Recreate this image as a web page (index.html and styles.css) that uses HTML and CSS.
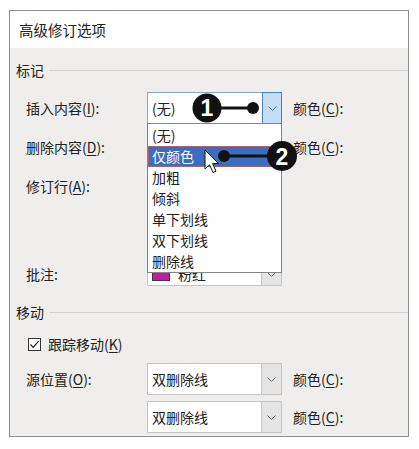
FILE: index.html
```html
<!DOCTYPE html>
<html lang="zh-CN">
<head>
<meta charset="utf-8">
<title>高级修订选项</title>
<link rel="stylesheet" href="styles.css">
</head>
<body>
<div class="dialog">
  <div class="titlebar">高级修订选项</div>
  <div class="content">
    <div class="group-head"><span>标记</span><i class="rule"></i></div>

    <div class="row r1">
      <span class="lbl">插入内容(<u>I</u>):</span>
      <div class="combo active">
        <span class="val">(无)</span>
        <span class="btn"><svg width="9" height="5" viewBox="0 0 9 5"><path d="M0.5 0.5 L4.5 4.5 L8.5 0.5" fill="none" stroke="#3f6ea8" stroke-width="1"/></svg></span>
        <ul class="list">
          <li>(无)</li>
          <li class="sel">仅颜色</li>
          <li>加粗</li>
          <li>倾斜</li>
          <li>单下划线</li>
          <li>双下划线</li>
          <li>删除线</li>
        </ul>
      </div>
      <span class="color-lbl">颜色(<u>C</u>):</span>
    </div>

    <div class="row r2">
      <span class="lbl">删除内容(<u>D</u>):</span>
      <div class="combo"><span class="val"></span><span class="btn"></span></div>
      <span class="color-lbl">颜色(<u>C</u>):</span>
    </div>

    <div class="row r3">
      <span class="lbl">修订行(<u>A</u>):</span>
      <div class="combo"><span class="val"></span><span class="btn"></span></div>
    </div>

    <div class="row r4">
      <span class="lbl">批注:</span>
      <div class="combo short">
        <span class="val"><i class="swatch"></i>粉红</span>
        <span class="btn"><svg width="9" height="5" viewBox="0 0 9 5"><path d="M0.5 0.5 L4.5 4.5 L8.5 0.5" fill="none" stroke="#666" stroke-width="1"/></svg></span>
      </div>
    </div>

    <div class="group-head g2"><span>移动</span><i class="rule"></i></div>

    <div class="check-row">
      <span class="checkbox"><svg width="11" height="11" viewBox="0 0 11 11"><path d="M1.5 5.5 L4.2 8.3 L9.6 2.2" fill="none" stroke="#222" stroke-width="1.2"/></svg></span>
      <span>跟踪移动(<u>K</u>)</span>
    </div>

    <div class="row r5">
      <span class="lbl">源位置(<u>O</u>):</span>
      <div class="combo">
        <span class="val">双删除线</span>
        <span class="btn"><svg width="9" height="5" viewBox="0 0 9 5"><path d="M0.5 0.5 L4.5 4.5 L8.5 0.5" fill="none" stroke="#666" stroke-width="1"/></svg></span>
      </div>
      <span class="color-lbl">颜色(<u>C</u>):</span>
    </div>

    <div class="row r6">
      <span class="lbl"></span>
      <div class="combo">
        <span class="val">双删除线</span>
        <span class="btn"><svg width="9" height="5" viewBox="0 0 9 5"><path d="M0.5 0.5 L4.5 4.5 L8.5 0.5" fill="none" stroke="#666" stroke-width="1"/></svg></span>
      </div>
      <span class="color-lbl">颜色(<u>C</u>):</span>
    </div>
  </div>

  <svg class="callouts" width="398" height="425" viewBox="10 11 398 425">
    <line x1="215" y1="108" x2="253" y2="108" stroke="#111" stroke-width="3"/>
    <circle cx="253" cy="108" r="6" fill="#111"/>
    <circle cx="207" cy="108" r="14.5" fill="#111"/>
    <text x="207" y="116" class="num">1</text>

    <path d="M205 150 L205 169 L209.5 164.8 L213 172.5 L216 171.2 L212.6 163.6 L218.6 163.6 Z" fill="#fff" stroke="#111" stroke-width="1"/>

    <line x1="224" y1="156" x2="272" y2="156" stroke="#111" stroke-width="3"/>
    <circle cx="224" cy="156" r="6" fill="#111"/>
    <circle cx="282" cy="156" r="15" fill="#111"/>
    <text x="282" y="164.5" class="num">2</text>
  </svg>
</div>
</body>
</html>
```

FILE: styles.css
```css
body {
  margin: 0;
  background: #ffffff;
  font-family: "Noto Sans CJK SC", "Noto Sans", sans-serif;
  font-size: 14px;
  color: #222222;
}

.dialog {
  position: relative;
  margin: 10px 0 0 9px;
  width: 400px;
  height: 427px;
  box-sizing: border-box;
  border: 1px solid #8f8f8f;
  background: #efeeec;
  overflow: hidden;
}

.titlebar {
  height: 37px;
  line-height: 37px;
  padding-left: 9px;
  background: #ffffff;
  font-size: 14.5px;
}

.content {
  padding-top: 13px;
}

.group-head {
  display: flex;
  align-items: center;
  gap: 5px;
  height: 18px;
  line-height: 18px;
  padding-left: 6px;
}

.group-head .rule {
  flex: 1;
  height: 1px;
  background: #d3d3d3;
}

.g2 {
  margin-top: 17px;
}

.row {
  display: flex;
  align-items: center;
  height: 32px;
  padding-left: 16px;
}

.r1 { margin-top: 13px; }
.r2 { margin-top: 7px; }
.r3 { margin-top: 7px; }
.r4 { margin-top: 60px; height: 24px; }
.r5 { margin-top: 10px; }
.r6 { margin-top: 6px; }

.lbl {
  width: 121px;
  line-height: 20px;
}

u {
  text-decoration: underline;
  text-underline-offset: 2px;
  text-decoration-thickness: 1px;
}

.combo {
  position: relative;
  display: flex;
  width: 135px;
  height: 32px;
  box-sizing: border-box;
  border: 1px solid #c4c4c4;
  background: #ffffff;
}

.combo.short {
  height: 24px;
}

.val {
  flex: 1;
  display: flex;
  align-items: center;
  padding-left: 4px;
  white-space: nowrap;
}

.btn {
  width: 19px;
  display: flex;
  align-items: center;
  justify-content: center;
  border-left: 1px solid #c4c4c4;
  background: #e4e4e4;
}

.combo.active {
  border-color: #8aa6c8;
}

.combo.active .btn {
  width: 20px;
  margin: -1px -1px -1px 0;
  box-sizing: border-box;
  border: 1px solid #4a82cc;
  background: #c6ddf4;
}

.swatch {
  display: inline-block;
  width: 18px;
  height: 13px;
  box-sizing: border-box;
  margin-right: 8px;
  border: 1px solid #3a3a3a;
  background: #c41b9f;
}

.color-lbl {
  margin-left: 11px;
  line-height: 20px;
}

.list {
  position: absolute;
  left: -1px;
  top: 30px;
  z-index: 2;
  width: 135px;
  box-sizing: border-box;
  margin: 0;
  padding: 1px 0 0;
  list-style: none;
  border: 1px solid #858585;
  background: #ffffff;
}

.list li {
  height: 21px;
  line-height: 21px;
  padding-left: 4px;
  box-sizing: border-box;
}

.list li.sel {
  background: #3b6dc0;
  color: #ffffff;
  border: 1px solid #a8646e;
  line-height: 19px;
  padding-left: 3px;
}

.check-row {
  display: flex;
  align-items: center;
  gap: 7px;
  height: 18px;
  margin-top: 14px;
  padding-left: 18px;
}

.checkbox {
  display: flex;
  align-items: center;
  justify-content: center;
  width: 13px;
  height: 13px;
  box-sizing: border-box;
  border: 1px solid #333333;
  background: #ffffff;
}

.callouts {
  position: absolute;
  left: 0;
  top: 0;
  z-index: 5;
}

.num {
  font-family: "Liberation Sans", Arial, sans-serif;
  font-weight: bold;
  font-size: 23px;
  fill: #ffffff;
  text-anchor: middle;
}
```
